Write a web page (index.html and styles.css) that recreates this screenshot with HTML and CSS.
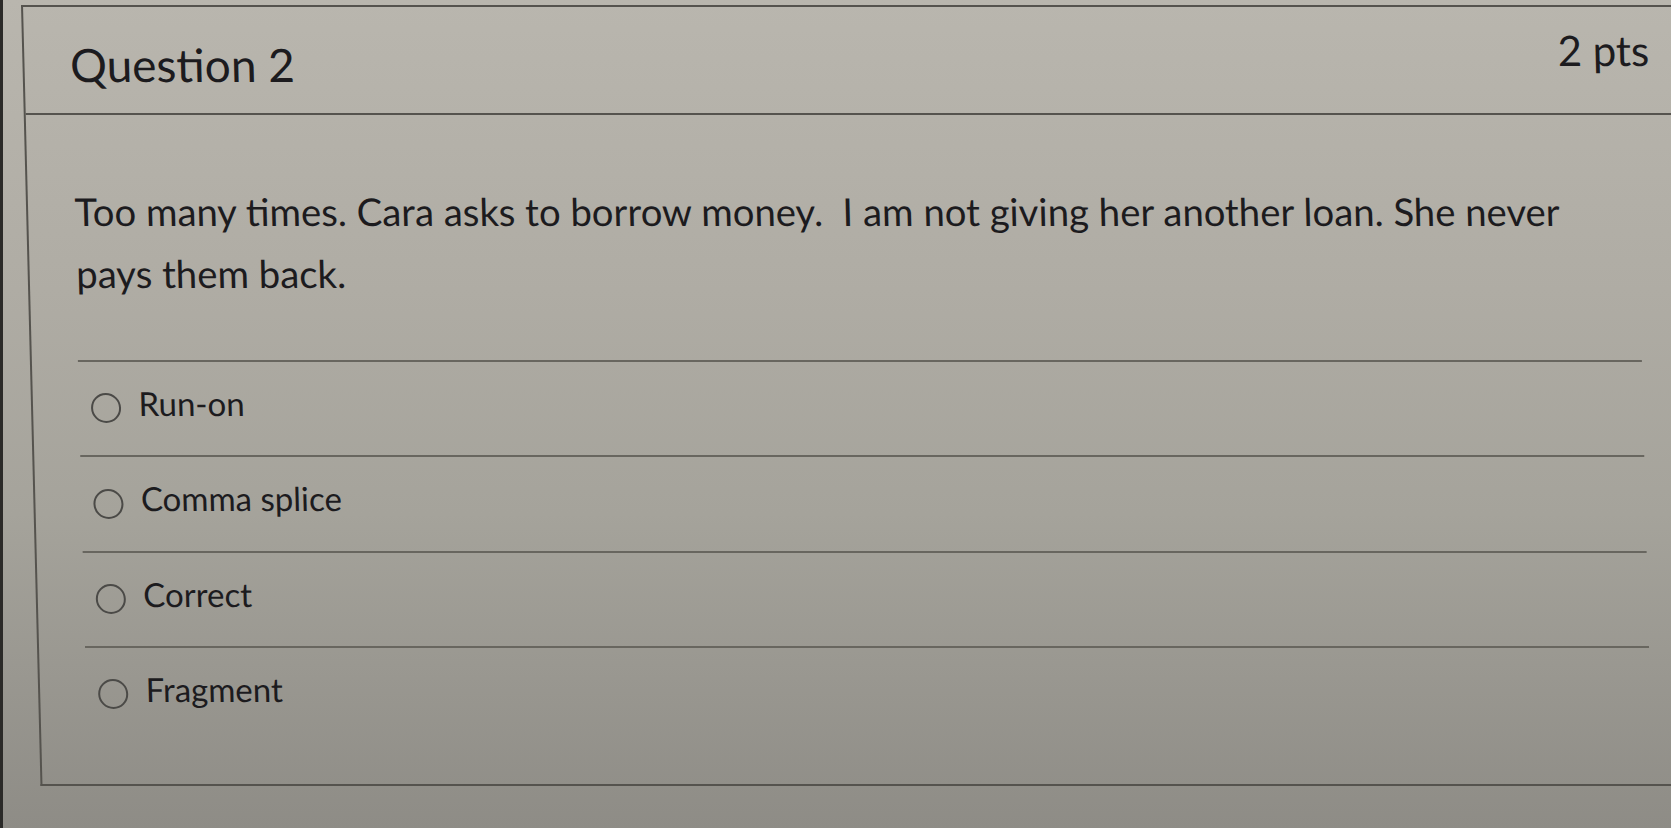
FILE: index.html
```html
<!DOCTYPE html>
<html lang="en">
<head>
<meta charset="utf-8">
<title>Question 2</title>
<link rel="stylesheet" href="styles.css">
</head>
<body>
<div class="screen">
  <div class="question">
    <div class="q-header">
      <h2 class="q-title">Question 2</h2>
      <div class="q-points">2 pts</div>
    </div>
    <div class="q-body">
      <p class="q-text">Too many times. Cara asks to borrow money.&nbsp; I am not giving her another loan. She never pays them back.</p>
      <div class="answers">
        <label class="answer"><span class="radio"></span><span class="answer-label">Run-on</span></label>
        <label class="answer"><span class="radio"></span><span class="answer-label">Comma splice</span></label>
        <label class="answer"><span class="radio"></span><span class="answer-label">Correct</span></label>
        <label class="answer"><span class="radio"></span><span class="answer-label">Fragment</span></label>
      </div>
    </div>
  </div>
</div>
</body>
</html>
```

FILE: styles.css
```css
html, body {
  margin: 0;
  height: 100%;
  overflow: hidden;
}

body {
  background: linear-gradient(180deg, #b9b6ae 0%, #afaca4 35%, #a5a39b 62%, #8e8c86 100%);
  font-family: Lato, "Noto Sans", sans-serif;
  color: #1c1b1e;
}

.screen {
  box-sizing: border-box;
  height: 828px;
  border-left: 3px solid #2b2a28;
  padding: 5px 0 0 18px;
}

.question {
  border: 2px solid #55534e;
  border-right: none;
  transform: skewX(1.43deg);
  transform-origin: 0 0;
}

.q-header {
  box-sizing: border-box;
  height: 108px;
  display: flex;
  justify-content: space-between;
  align-items: flex-start;
  padding: 21.7px 23px 0 45.5px;
  border-bottom: 2px solid #55534e;
}

.q-title {
  margin: 13.5px 0 0;
  font-size: 46px;
  font-weight: 400;
  line-height: 1;
}

.q-points {
  font-size: 42px;
  line-height: 1;
}

.q-body {
  padding: 65.2px 38px 43px 46.5px;
}

.q-text {
  margin: 0;
  font-size: 38.3px;
  line-height: 62px;
}

.answers {
  margin: 55.8px 0 0 -0.5px;
}

.answer {
  display: flex;
  align-items: flex-start;
  border-top: 2px solid #68665f;
  padding: 22.2px 0 31.8px 12px;
  font-size: 33px;
  line-height: 38px;
}

.radio {
  flex: none;
  box-sizing: border-box;
  width: 30px;
  height: 30px;
  margin: 9.3px 17.5px 0 0;
  border: 2px solid #4b4a47;
  border-radius: 50%;
}
```
